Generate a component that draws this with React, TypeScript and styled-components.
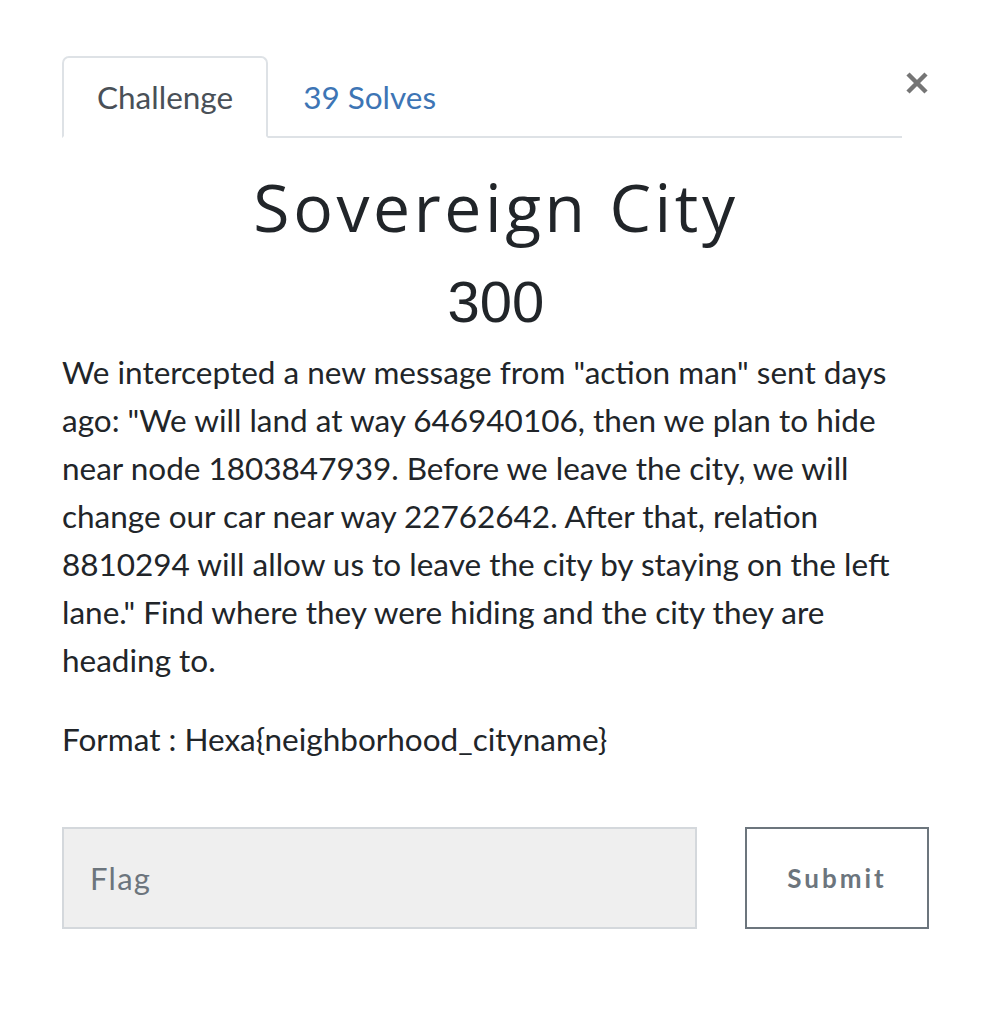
import React from "react";
import styled, { createGlobalStyle } from "styled-components";

const Global = createGlobalStyle`
  html, body { margin: 0; padding: 0; background: #fff; }
  body { font-family: Lato, "Open Sans", sans-serif; color: #212529; }
  * { box-sizing: border-box; }
`;

const Modal = styled.div`
  width: 992px;
  padding: 56px 62px 60px 62px;
`;

const Header = styled.div`
  display: flex;
  align-items: flex-start;
  justify-content: space-between;
`;

const TabList = styled.nav`
  display: flex;
  width: 840px;
  border-bottom: 2px solid #dee2e6;
`;

const Tab = styled.div<{ $active?: boolean }>`
  height: 82px;
  padding: 0 33px;
  display: flex;
  align-items: center;
  font-size: 31.5px;
  margin-bottom: -2px;
  border: 2px solid ${(p) => (p.$active ? "#dee2e6" : "transparent")};
  border-bottom-color: ${(p) => (p.$active ? "#fff" : "transparent")};
  border-radius: 7px 7px 0 0;
  color: ${(p) => (p.$active ? "#495057" : "#3d75b5")};
  background: ${(p) => (p.$active ? "#fff" : "transparent")};
`;

const Close = styled.button`
  border: none;
  background: none;
  padding: 0;
  margin-top: 14px;
  width: 26px;
  height: 26px;
  display: flex;
  align-items: center;
  justify-content: center;
`;

const Title = styled.h1`
  margin: 28px 0 0;
  text-align: center;
  font-family: "Open Sans", sans-serif;
  font-weight: 400;
  font-size: 66px;
  letter-spacing: 3.6px;
  line-height: 80px;
  color: #212529;
`;

const Points = styled.h2`
  margin: 24px 0 0;
  text-align: center;
  font-family: "Liberation Sans", Arial, sans-serif;
  font-weight: 400;
  font-size: 58px;
  line-height: 64px;
  color: #212529;
`;

const Description = styled.div`
  margin-top: 14px;
`;

const Paragraph = styled.p`
  margin: 0 0 31px;
  font-size: 31.5px;
  line-height: 48px;
  color: #212529;
`;

const FormRow = styled.form`
  display: flex;
  gap: 48px;
  margin-top: 64px;
`;

const FlagInput = styled.input`
  width: 635px;
  height: 102px;
  background: #efefef;
  border: 2px solid #d4d8dc;
  padding: 0 26px;
  font-family: Lato, sans-serif;
  font-size: 31px;
  letter-spacing: 1.3px;
  color: #495057;
  outline: none;
  &::placeholder { color: #6c757d; }
`;

const SubmitButton = styled.button`
  width: 184px;
  height: 102px;
  background: #fff;
  border: 2px solid #6c757d;
  color: #6c757d;
  font-family: Lato, sans-serif;
  font-weight: 700;
  font-size: 26px;
  letter-spacing: 3px;
`;

export default function App() {
  return (
    <>
      <Global />
      <Modal>
        <Header>
          <TabList>
            <Tab $active>Challenge</Tab>
            <Tab>39 Solves</Tab>
          </TabList>
          <Close aria-label="Close">
            <svg width="24" height="24" viewBox="0 0 24 24">
              <path d="M3 3 L21 21 M21 3 L3 21" stroke="#757575" strokeWidth="4.5" strokeLinecap="butt" />
            </svg>
          </Close>
        </Header>
        <Title>Sovereign City</Title>
        <Points>300</Points>
        <Description>
          <Paragraph>
            We intercepted a new message from "action man" sent days ago: "We will land at way 646940106, then we plan to hide near node 1803847939. Before we leave the city, we will change our car near way 22762642. After that, relation 8810294 will allow us to leave the city by staying on the left lane." Find where they were hiding and the city they are heading to.
          </Paragraph>
          <Paragraph>Format : Hexa{"{"}neighborhood_cityname{"}"}</Paragraph>
        </Description>
        <FormRow onSubmit={(e) => e.preventDefault()}>
          <FlagInput placeholder="Flag" />
          <SubmitButton type="submit">Submit</SubmitButton>
        </FormRow>
      </Modal>
    </>
  );
}
